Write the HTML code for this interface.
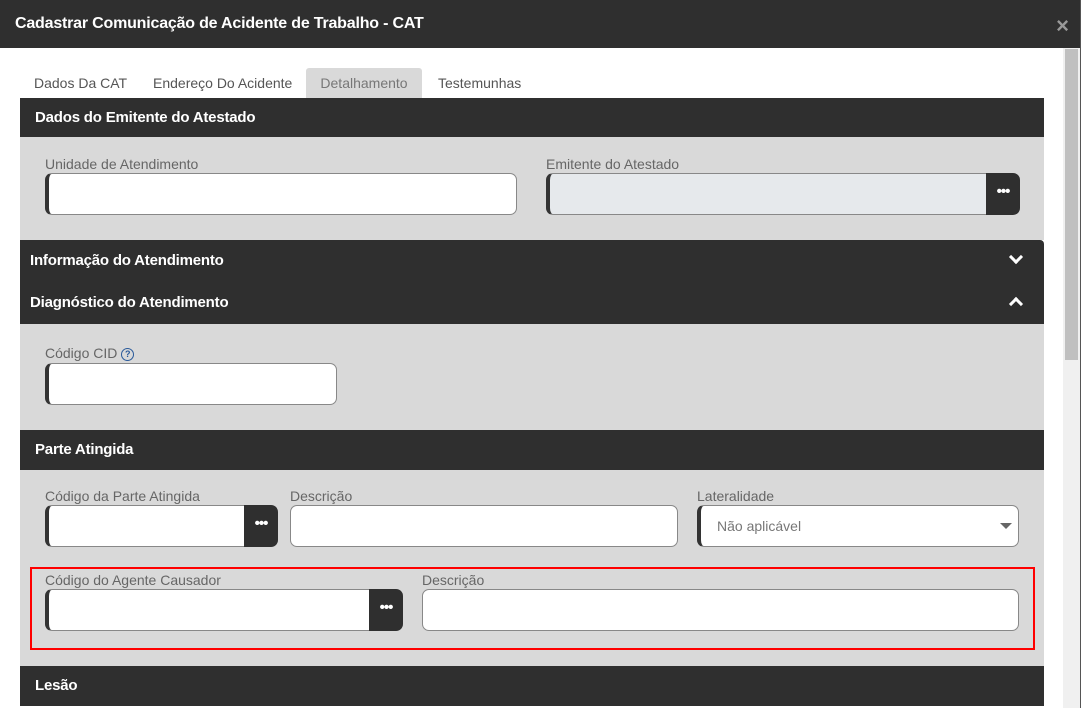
<!DOCTYPE html>
<html><head><meta charset="utf-8"><style>
*{box-sizing:border-box;margin:0;padding:0}
body{width:1081px;height:708px;overflow:hidden;background:#fff;font-family:"Liberation Sans",Arial,sans-serif;position:relative}
.a{position:absolute}
.hd{left:0;top:0;width:1081px;height:48px;background:#2f2f2f;color:#fff;font-weight:bold;font-size:16px;padding:15px 0 0 15px;letter-spacing:-0.2px}
.x{right:12px;top:13px;color:#999;font-size:22px;font-weight:bold}
.tab{top:68px;height:30px;font-size:14px;color:#555;padding-top:7px}
.sec{left:20px;width:1024px;background:#2f2f2f;color:#fff;font-weight:bold;font-size:15px;letter-spacing:-0.2px}
.body{left:20px;width:1024px;background:#d9d9d9}
.lbl{font-size:14px;color:#666}
.in{background:#fff;border:1px solid #888;border-left:4px solid #333;border-radius:7px;height:42px}
.btn{background:#2f2f2f;border-radius:0 7px 7px 0;width:34px;height:42px;color:#fff;font-size:15px;font-weight:bold;text-align:center;line-height:38px;letter-spacing:-1px}
.chev{width:10px;height:10px;border-right:3px solid #fff;border-bottom:3px solid #fff}
.st{color:#fff;font-weight:bold;font-size:15px;letter-spacing:-0.2px}
</style></head><body>
<div class="a hd">Cadastrar Comunicação de Acidente de Trabalho - CAT</div>
<div class="a x">×</div>
<div class="a" style="left:1063px;top:48px;width:17px;height:660px;background:#f0f0f0"></div>
<div class="a" style="left:1065px;top:49px;width:13px;height:311px;background:#c0c0c0"></div>
<div class="a" style="left:1080px;top:0;width:1px;height:708px;background:#555"></div>
<div class="a tab" style="left:34px">Dados Da CAT</div>
<div class="a tab" style="left:153px">Endereço Do Acidente</div>
<div class="a tab" style="left:306px;width:116px;background:#d9d9d9;border-radius:3px 3px 0 0;text-align:center;color:#777">Detalhamento</div>
<div class="a tab" style="left:438px">Testemunhas</div>

<div class="a sec" style="top:98px;height:39px;padding:11px 0 0 15px">Dados do Emitente do Atestado</div>
<div class="a body" style="top:137px;height:103px"></div>
<div class="a lbl" style="left:45px;top:156px">Unidade de Atendimento</div>
<div class="a in" style="left:45px;top:173px;width:472px"></div>
<div class="a lbl" style="left:546px;top:156px">Emitente do Atestado</div>
<div class="a in" style="left:546px;top:173px;width:445px;background:#e6e9ec;border-radius:7px 0 0 7px"></div>
<div class="a btn" style="left:986px;top:173px">•••</div>

<div class="a sec" style="top:240px;height:84px;border-radius:0 4px 0 0"></div>
<div class="a st" style="left:30px;top:252px">Informação do Atendimento</div>
<div class="a chev" style="left:1011px;top:252px;transform:rotate(45deg)"></div>
<div class="a st" style="left:30px;top:294px">Diagnóstico do Atendimento</div>
<div class="a chev" style="left:1011px;top:299px;transform:rotate(-135deg)"></div>
<div class="a body" style="top:324px;height:106px"></div>
<div class="a lbl" style="left:45px;top:345px">Código CID <span style="display:inline-block;width:13px;height:13px;border:1.5px solid #2a5a9a;border-radius:50%;font-size:9px;color:#2a5a9a;text-align:center;line-height:10px;font-weight:bold;vertical-align:1px">?</span></div>
<div class="a in" style="left:45px;top:363px;width:292px"></div>

<div class="a sec" style="top:430px;height:40px;padding:11px 0 0 15px">Parte Atingida</div>
<div class="a body" style="top:470px;height:196px"></div>
<div class="a lbl" style="left:45px;top:488px">Código da Parte Atingida</div>
<div class="a in" style="left:45px;top:505px;width:204px;border-radius:7px 0 0 7px"></div>
<div class="a btn" style="left:244px;top:505px">•••</div>
<div class="a lbl" style="left:290px;top:488px">Descrição</div>
<div class="a in" style="left:290px;top:505px;width:388px;border-left:1px solid #888"></div>
<div class="a lbl" style="left:697px;top:488px">Lateralidade</div>
<div class="a in" style="left:697px;top:505px;width:322px;font-size:14px;color:#777;padding:12px 0 0 16px">Não aplicável</div>
<div class="a" style="left:1000px;top:523px;border-left:6px solid transparent;border-right:6px solid transparent;border-top:6px solid #666"></div>

<div class="a" style="left:30px;top:567px;width:1005px;height:83px;border:2px solid #f00"></div>
<div class="a lbl" style="left:45px;top:572px">Código do Agente Causador</div>
<div class="a in" style="left:45px;top:589px;width:329px;border-radius:7px 0 0 7px"></div>
<div class="a btn" style="left:369px;top:589px">•••</div>
<div class="a lbl" style="left:422px;top:572px">Descrição</div>
<div class="a in" style="left:422px;top:589px;width:597px;border-left:1px solid #888"></div>

<div class="a sec" style="top:666px;height:40px;padding:11px 0 0 15px">Lesão</div>
</body></html>
